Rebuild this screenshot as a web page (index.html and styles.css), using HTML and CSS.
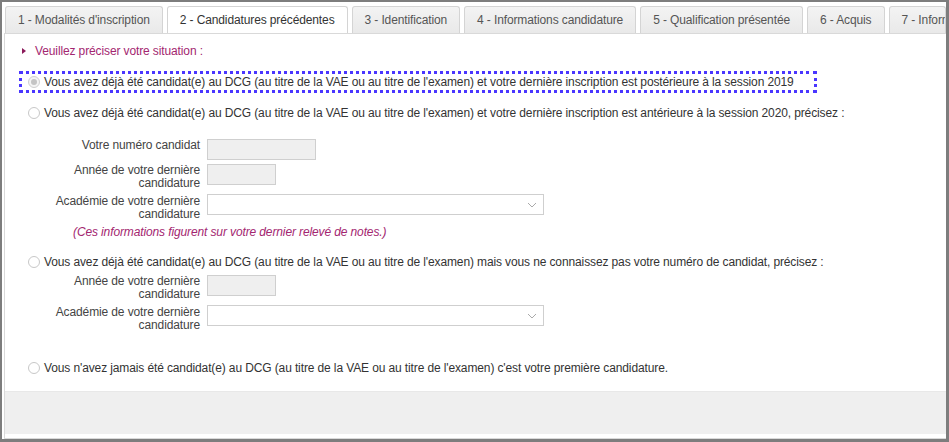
FILE: index.html
```html
<!DOCTYPE html>
<html lang="fr">
<head>
<meta charset="utf-8">
<link rel="stylesheet" href="styles.css">
</head>
<body>
<div class="frame">
  <div class="tabs">
    <div class="tab">1 - Modalités d'inscription</div>
    <div class="tab active">2 - Candidatures précédentes</div>
    <div class="tab">3 - Identification</div>
    <div class="tab">4 - Informations candidature</div>
    <div class="tab">5 - Qualification présentée</div>
    <div class="tab">6 - Acquis</div>
    <div class="tab last">7 - Informations</div>
  </div>
  <div class="panel">
    <div class="body">
      <div class="heading"><span class="tri"></span>Veuillez préciser votre situation :</div>

      <div class="option focused"><span class="radio checked"></span><span>Vous avez déjà été candidat(e) au DCG (au titre de la VAE ou au titre de l'examen) et votre dernière inscription est postérieure à la session 2019</span></div>

      <div class="option opt2"><span class="radio"></span><span>Vous avez déjà été candidat(e) au DCG (au titre de la VAE ou au titre de l'examen) et votre dernière inscription est antérieure à la session 2020, précisez :</span></div>

      <div class="fields f1">
        <div class="row r-num"><div class="label">Votre numéro candidat</div><div class="input w-num"></div></div>
        <div class="row"><div class="label">Année de votre dernière candidature</div><div class="input w-year"></div></div>
        <div class="row r-sel"><div class="label">Académie de votre dernière candidature</div><div class="select"><svg width="10" height="6" viewBox="0 0 10 6"><path d="M1 1 L5 5 L9 1" fill="none" stroke="#aaa" stroke-width="1"/></svg></div></div>
        <div class="note">(Ces informations figurent sur votre dernier relevé de notes.)</div>
      </div>

      <div class="option opt3"><span class="radio"></span><span>Vous avez déjà été candidat(e) au DCG (au titre de la VAE ou au titre de l'examen) mais vous ne connaissez pas votre numéro de candidat, précisez :</span></div>

      <div class="fields f2">
        <div class="row"><div class="label">Année de votre dernière candidature</div><div class="input w-year"></div></div>
        <div class="row r-sel"><div class="label">Académie de votre dernière candidature</div><div class="select"><svg width="10" height="6" viewBox="0 0 10 6"><path d="M1 1 L5 5 L9 1" fill="none" stroke="#aaa" stroke-width="1"/></svg></div></div>
      </div>

      <div class="option opt4"><span class="radio"></span><span>Vous n'avez jamais été candidat(e) au DCG (au titre de la VAE ou au titre de l'examen) c'est votre première candidature.</span></div>
    </div>
    <div class="footer"></div>
  </div>
</div>
</body>
</html>
```

FILE: styles.css
```css
html, body {
  margin: 0;
  padding: 0;
  background: #ffffff;
}
body {
  font-family: "Liberation Sans", Arial, sans-serif;
  font-size: 12px;
  color: #333333;
  letter-spacing: -0.12px;
}
.frame {
  width: 949px;
  height: 442px;
  box-sizing: border-box;
  border-left: 2px solid #7d7d7d;
  border-top: 2px solid #7d7d7d;
  border-right: 3px solid #7d7d7d;
  border-bottom: 3px solid #7d7d7d;
  padding: 4px 0 0 2px;
  overflow: hidden;
  display: flex;
  flex-direction: column;
}
.tabs {
  display: flex;
  gap: 4px;
  padding-left: 1px;
  height: 27px;
  overflow: hidden;
  white-space: nowrap;
  position: relative;
  z-index: 1;
}
.tab {
  flex: none;
  height: 27px;
  box-sizing: border-box;
  padding: 0 12px;
  border: 1px solid #d4d4d4;
  border-bottom: none;
  border-radius: 3px 3px 0 0;
  background: linear-gradient(#f3f3f3, #e9e9e9);
  line-height: 26px;
  color: #555555;
  letter-spacing: -0.12px;
}
.tab.last {
  flex: 1;
  min-width: 0;
  overflow: hidden;
  padding-right: 0;
}
.tab.active {
  background: #ffffff;
  height: 28px;
  color: #333333;
}
.panel {
  width: 941px;
  flex: 1;
  border: 1px solid #d9d9d9;
  display: flex;
  flex-direction: column;
  background: #ffffff;
}
.body {
  flex: 1;
  padding: 10px 0 0 14px;
}
.heading {
  color: #a32670;
  line-height: 14px;
  padding-left: 3px;
  display: flex;
  align-items: center;
}
.tri {
  width: 0;
  height: 0;
  border-top: 3px solid transparent;
  border-bottom: 3px solid transparent;
  border-left: 4px solid #8b1a5a;
  margin-right: 9px;
}
.option {
  display: flex;
  align-items: center;
  line-height: 14px;
  color: #333333;
}
.option .radio {
  flex: none;
  width: 12px;
  height: 12px;
  box-sizing: border-box;
  border: 1px solid #c8c8c8;
  border-radius: 50%;
  background: #ffffff;
  margin-right: 4px;
  position: relative;
}
.radio.checked {
  border-color: #d0d0d0;
  background: #f4f4f4;
}
.radio.checked::after {
  content: "";
  position: absolute;
  left: 2px;
  top: 2px;
  width: 6px;
  height: 6px;
  border-radius: 50%;
  background: #c4c4c4;
}
.focused {
  margin-top: 13px;
  width: 786px;
  height: 16px;
  border: 3px dotted #4a36ff;
  padding-left: 6px;
}
.opt2 {
  margin-top: 13px;
  padding-left: 9px;
}
.fields {
  display: flex;
  flex-direction: column;
  gap: 4px;
}
.f1 {
  margin-top: 19px;
}
.row {
  display: flex;
  align-items: flex-start;
  gap: 7px;
}
.label {
  width: 150px;
  margin-left: 31px;
  text-align: right;
  line-height: 13px;
  color: #444444;
}
.input {
  height: 21px;
  box-sizing: border-box;
  border: 1px solid #cfcfcf;
  background: #efefef;
}
.w-num { width: 109px; }
.w-year { width: 69px; }
.select {
  width: 337px;
  height: 21px;
  box-sizing: border-box;
  border: 1px solid #cfcfcf;
  background: #ffffff;
  display: flex;
  align-items: center;
  justify-content: flex-end;
  padding-right: 6px;
}
.r-sel .label {
  margin-top: 1px;
}
.note {
  color: #a32670;
  font-style: italic;
  padding-left: 54px;
  line-height: 14px;
  margin-top: 0;
}
.opt3 {
  margin-top: 16px;
  padding-left: 9px;
}
.f2 {
  margin-top: 6px;
}
.opt4 {
  margin-top: 29px;
  padding-left: 9px;
}
.footer {
  height: 42px;
  background: #efefef;
  border-top: 1px solid #e8e8e8;
  margin-bottom: 4px;
}
```
